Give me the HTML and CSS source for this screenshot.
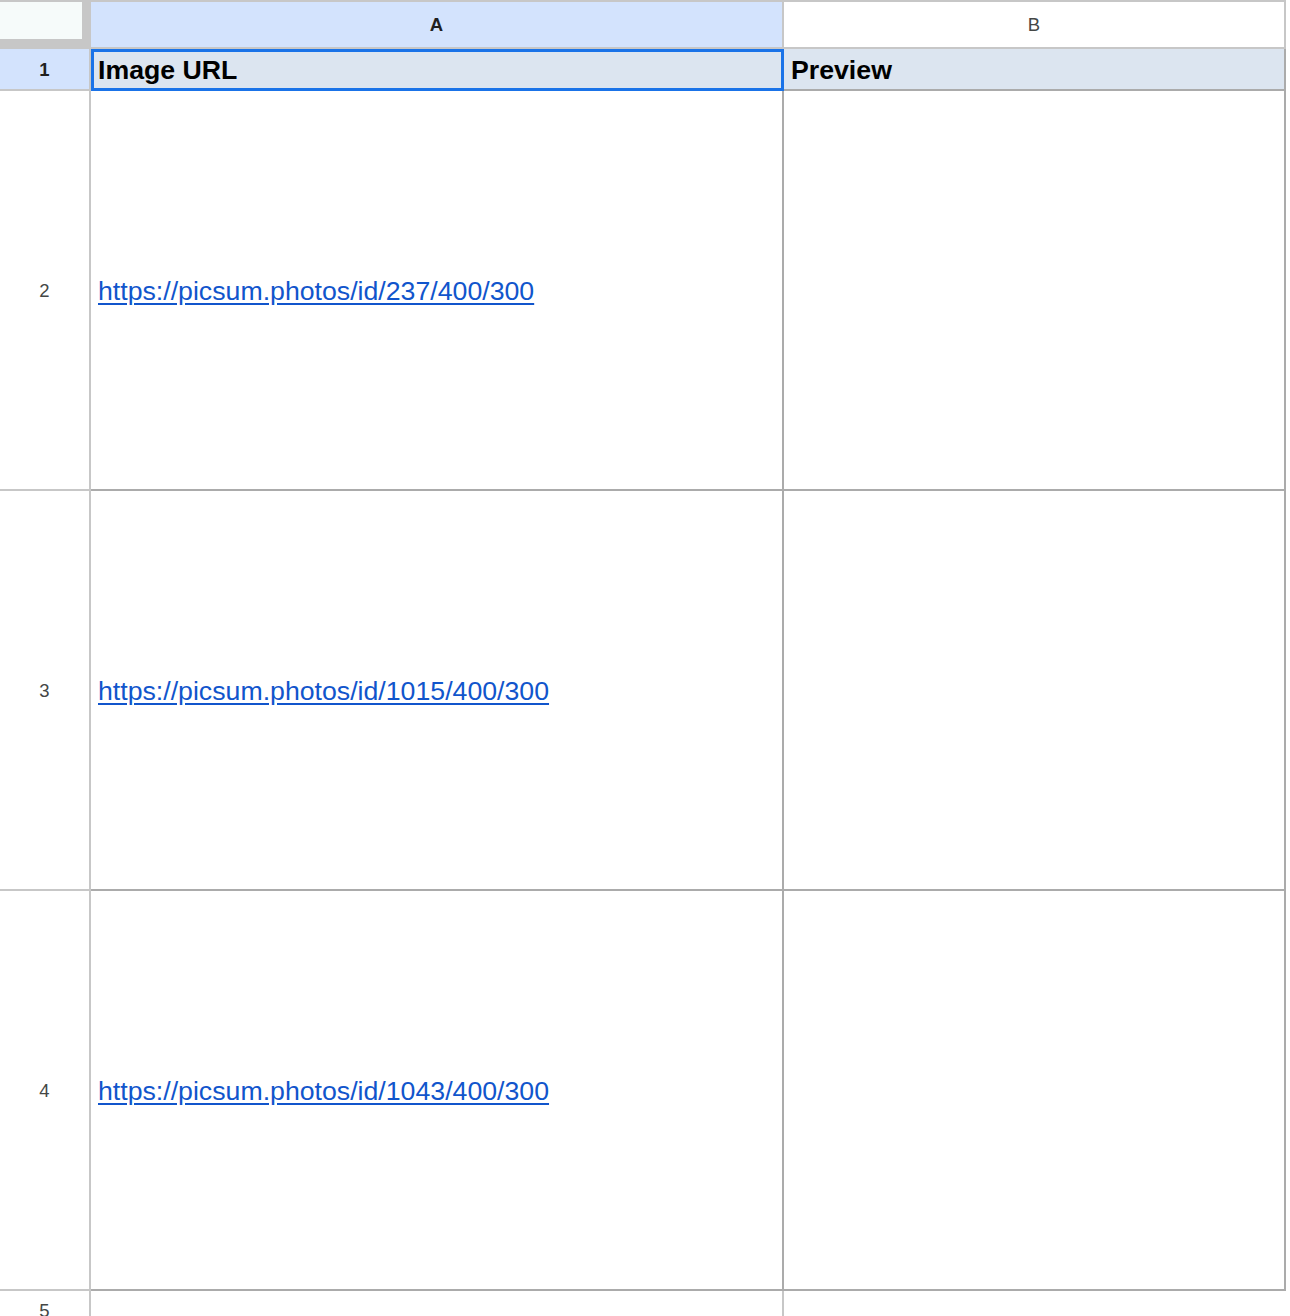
FILE: index.html
```html
<!DOCTYPE html>
<html>
<head>
<meta charset="utf-8">
<link rel="stylesheet" href="styles.css">
</head>
<body>
<div class="sheet">
  <div class="corner"><div class="corner-inner"></div></div>
  <div class="colhead selected">A</div>
  <div class="colhead">B</div>

  <div class="rowhead selected r1">1</div>
  <div class="cell header active">Image URL</div>
  <div class="cell header last">Preview</div>

  <div class="rowhead">2</div>
  <div class="cell"><a class="link" href="#">https://picsum.photos/id/237/400/300</a></div>
  <div class="cell last"></div>

  <div class="rowhead">3</div>
  <div class="cell"><a class="link" href="#">https://picsum.photos/id/1015/400/300</a></div>
  <div class="cell last"></div>

  <div class="rowhead">4</div>
  <div class="cell"><a class="link" href="#">https://picsum.photos/id/1043/400/300</a></div>
  <div class="cell last"></div>

  <div class="rowhead r5">5</div>
  <div class="cell empty"></div>
  <div class="cell empty nolast"></div>
</div>
</body>
</html>
```

FILE: styles.css
```css
html, body {
  margin: 0;
  padding: 0;
  background: #ffffff;
  overflow: hidden;
}

.sheet {
  display: grid;
  grid-template-columns: 91px 693px 502px;
  grid-template-rows: 49px 42px 400px 400px 400px 40px;
  font-family: "Liberation Sans", Arial, sans-serif;
  width: 1290px;
}

.sheet > div {
  box-sizing: border-box;
}

.corner {
  background: #c7c7c7;
  border-top: 2px solid #c7c7c7;
}

.corner-inner {
  width: 82px;
  height: 37px;
  background: #f6fbfa;
}

.colhead {
  display: flex;
  align-items: center;
  justify-content: center;
  border-top: 2px solid #c7c7c7;
  border-bottom: 2px solid #c7c7c7;
  border-right: 2px solid #c7c7c7;
  font-size: 18.5px;
  color: #444746;
  background: #ffffff;
  padding-top: 1px;
}

.colhead.selected {
  background: #d3e3fd;
  color: #1f1f1f;
  font-weight: bold;
}

.rowhead {
  display: flex;
  align-items: center;
  justify-content: center;
  border-right: 2px solid #c7c7c7;
  border-bottom: 2px solid #c7c7c7;
  font-size: 18.5px;
  color: #444746;
  padding-top: 2px;
}

.rowhead.selected {
  background: #d3e3fd;
  color: #1f1f1f;
  font-weight: bold;
}

.rowhead.r5 {
  align-items: flex-start;
  padding-top: 9px;
  border-bottom: none;
}

.cell {
  display: flex;
  align-items: center;
  padding-left: 7px;
  padding-top: 2px;
  border-right: 2px solid #ababab;
  border-bottom: 2px solid #ababab;
  font-size: 26.7px;
  color: #000000;
}

.cell.header {
  background: #dce5f0;
  font-weight: bold;
}

.cell.active {
  outline: 3px solid #1a73e8;
  outline-offset: -3px;
  border-right-color: #1a73e8;
}

.cell.empty {
  border-bottom: none;
  border-right-color: #c7c7c7;
}

.cell.empty.nolast {
  border-right: none;
}

.link {
  color: #1155cc;
  text-decoration: underline;
  text-underline-offset: 3px;
}
```
